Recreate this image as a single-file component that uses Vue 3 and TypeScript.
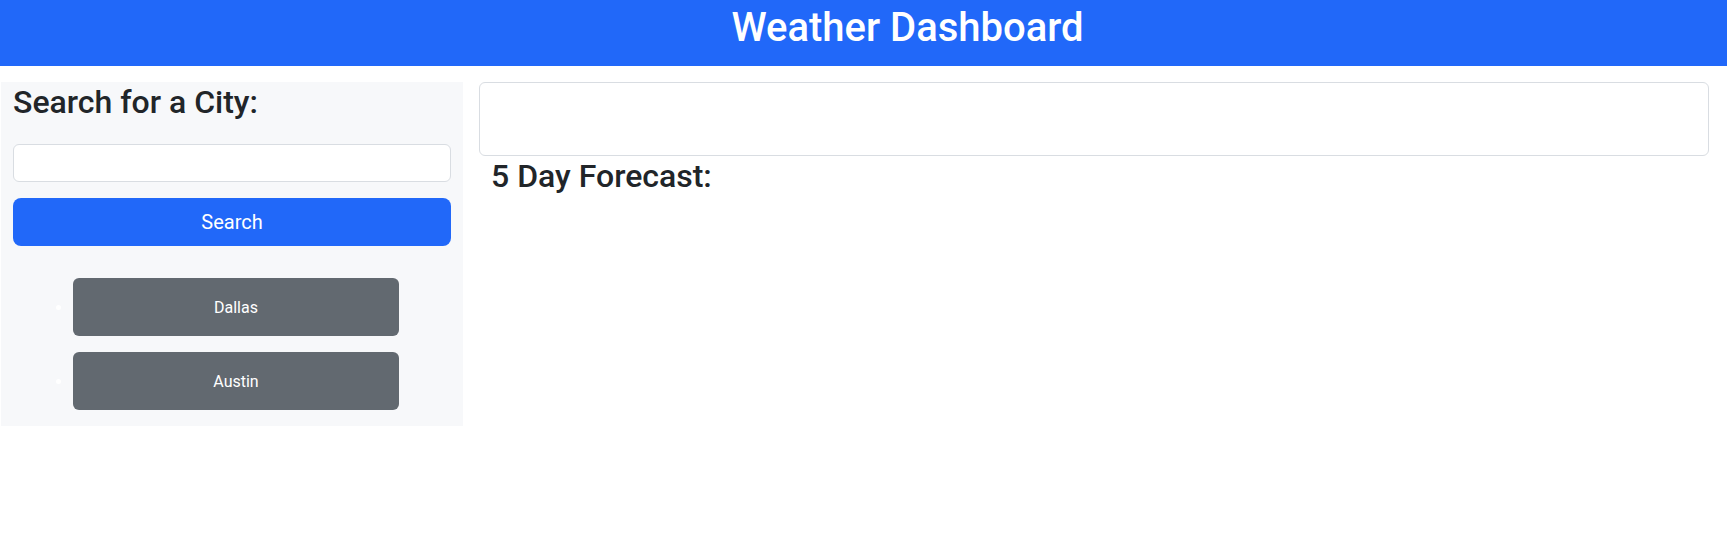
<script setup lang="ts">
import { ref } from 'vue'

const query = ref('')
const cities = ref<string[]>(['Dallas', 'Austin'])

function search(): void {
  const city = query.value.trim()
  if (city && !cities.value.includes(city)) cities.value.push(city)
  query.value = ''
}
</script>

<template>
  <div class="page">
    <header class="banner">
      <h1>Weather Dashboard</h1>
    </header>
    <main class="layout">
      <aside class="sidebar">
        <form @submit.prevent="search">
          <h2><label for="city">Search for a City:</label></h2>
          <input id="city" v-model="query" type="text" autocomplete="off" />
          <button class="search" type="submit">Search</button>
        </form>
        <ul class="history">
          <li v-for="city in cities" :key="city">
            <button type="button" @click="query = city">{{ city }}</button>
          </li>
        </ul>
      </aside>
      <section class="results">
        <div class="current"></div>
        <h2>5 Day Forecast:</h2>
      </section>
    </main>
  </div>
</template>

<style>
body {
  margin: 0;
  background: #fff;
}
</style>

<style scoped>
.page,
.page * {
  box-sizing: border-box;
}
.page {
  font-family: Roboto, "Liberation Sans", sans-serif;
  font-size: 16px;
  line-height: 24px;
  color: #212529;
}
.banner {
  padding: 0 0 10px 88px;
  background: #2168f9;
  color: #fff;
  text-align: center;
}
h1,
h2 {
  margin: 0;
  font-weight: 500;
}
h1 {
  padding: 4px 0;
  font-size: 40px;
  line-height: 48px;
}
h2 {
  font-size: 32px;
  line-height: 38px;
}
.layout {
  display: grid;
  grid-template-columns: 77fr 205fr;
  align-items: start;
  gap: 16px;
  padding: 16px 18px 16px 1px;
}
.sidebar {
  padding: 0 12px 16px;
  background: #f7f8fa;
}
form {
  display: flex;
  flex-direction: column;
  gap: 16px;
}
.sidebar h2 {
  padding: 1px 0 7px;
}
input {
  width: 100%;
  height: 38px;
  padding: 6px 12px;
  border: 1px solid #d9dde2;
  border-radius: 6px;
  background: #fff;
  color: inherit;
  font: inherit;
}
button {
  display: block;
  width: 100%;
  border: 0;
  color: #fff;
  font: inherit;
  text-align: center;
  cursor: pointer;
}
.search {
  height: 48px;
  border-radius: 8px;
  background: #2168f9;
  font-size: 20px;
}
.history {
  display: flex;
  flex-direction: column;
  gap: 16px;
  margin: 32px 0 0;
  padding: 0 52px 0 60px;
  color: #fff;
}
.history button {
  height: 58px;
  padding: 18px 12px 16px;
  border-radius: 6px;
  background: #626970;
}
.current {
  height: 74px;
  border: 1px solid #d9dde2;
  border-radius: 6px;
}
.results h2 {
  padding: 1px 12px 0;
}
</style>
